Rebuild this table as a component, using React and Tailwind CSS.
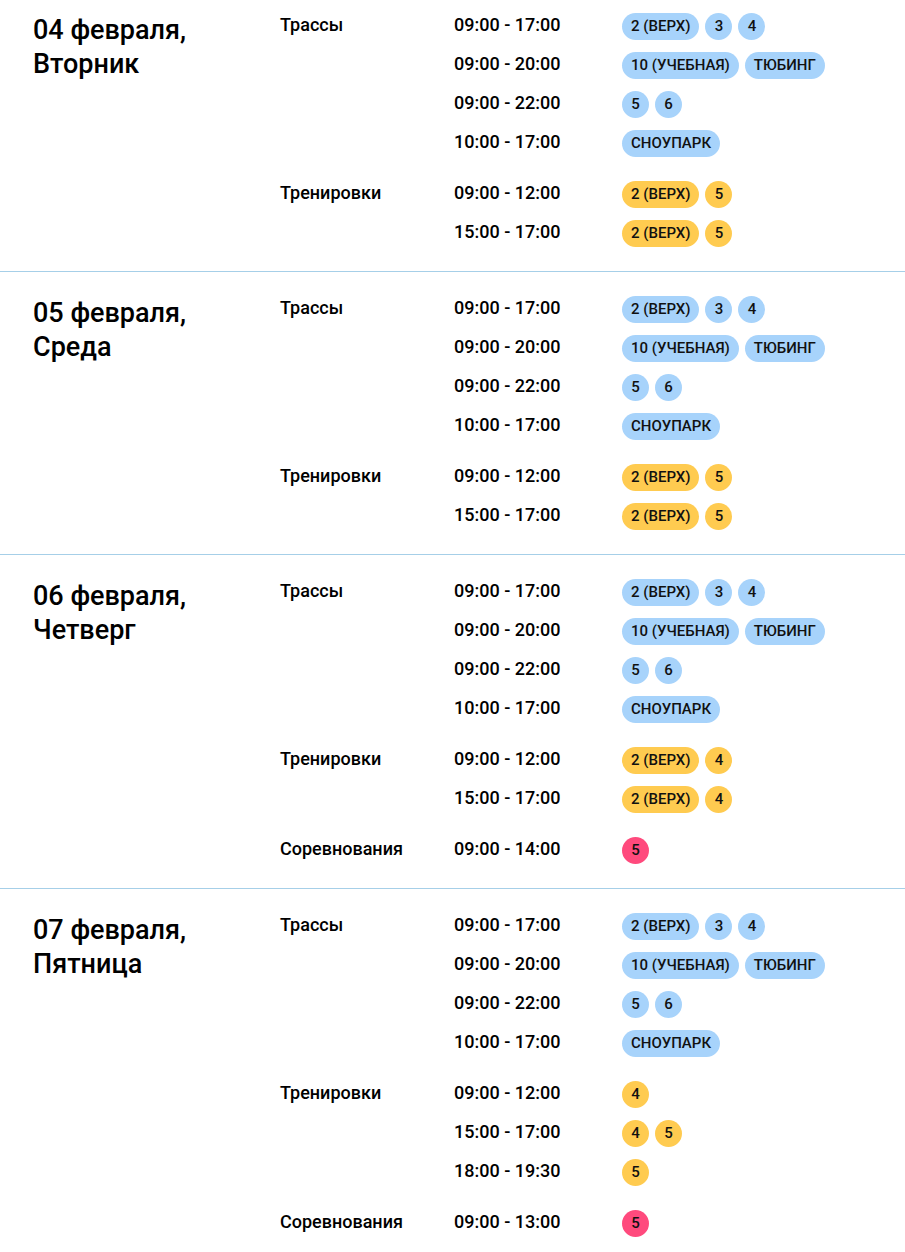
import React from 'react';

const trails = [
  { time: '09:00 - 17:00', chips: ['2 (ВЕРХ)', '3', '4'], color: 'blue' },
  { time: '09:00 - 20:00', chips: ['10 (УЧЕБНАЯ)', 'ТЮБИНГ'], color: 'blue' },
  { time: '09:00 - 22:00', chips: ['5', '6'], color: 'blue' },
  { time: '10:00 - 17:00', chips: ['СНОУПАРК'], color: 'blue' },
];

const days = [
  {
    date: '04 февраля,',
    weekday: 'Вторник',
    groups: [
      { label: 'Трассы', rows: trails },
      {
        label: 'Тренировки',
        rows: [
          { time: '09:00 - 12:00', chips: ['2 (ВЕРХ)', '5'], color: 'yellow' },
          { time: '15:00 - 17:00', chips: ['2 (ВЕРХ)', '5'], color: 'yellow' },
        ],
      },
    ],
  },
  {
    date: '05 февраля,',
    weekday: 'Среда',
    groups: [
      { label: 'Трассы', rows: trails },
      {
        label: 'Тренировки',
        rows: [
          { time: '09:00 - 12:00', chips: ['2 (ВЕРХ)', '5'], color: 'yellow' },
          { time: '15:00 - 17:00', chips: ['2 (ВЕРХ)', '5'], color: 'yellow' },
        ],
      },
    ],
  },
  {
    date: '06 февраля,',
    weekday: 'Четверг',
    groups: [
      { label: 'Трассы', rows: trails },
      {
        label: 'Тренировки',
        rows: [
          { time: '09:00 - 12:00', chips: ['2 (ВЕРХ)', '4'], color: 'yellow' },
          { time: '15:00 - 17:00', chips: ['2 (ВЕРХ)', '4'], color: 'yellow' },
        ],
      },
      {
        label: 'Соревнования',
        rows: [{ time: '09:00 - 14:00', chips: ['5'], color: 'red' }],
      },
    ],
  },
  {
    date: '07 февраля,',
    weekday: 'Пятница',
    groups: [
      { label: 'Трассы', rows: trails },
      {
        label: 'Тренировки',
        rows: [
          { time: '09:00 - 12:00', chips: ['4'], color: 'yellow' },
          { time: '15:00 - 17:00', chips: ['4', '5'], color: 'yellow' },
          { time: '18:00 - 19:30', chips: ['5'], color: 'yellow' },
        ],
      },
      {
        label: 'Соревнования',
        rows: [{ time: '09:00 - 13:00', chips: ['5'], color: 'red' }],
      },
    ],
  },
];

const chipColors = {
  blue: 'bg-[#a7d3fb]',
  yellow: 'bg-[#ffcb50]',
  red: 'bg-[#ff4a7d]',
};

function Chip({ text, color }) {
  return (
    <span
      className={`${chipColors[color]} h-[27px] min-w-[27px] rounded-full px-[9px] flex items-center justify-center text-[15px] font-medium text-[#111] leading-none`}
    >
      {text}
    </span>
  );
}

function Day({ day, first }) {
  return (
    <div className={`flex border-b border-[#a6cfe8] pb-[24px] ${first ? 'pt-[13px]' : 'pt-[24px]'}`}>
      <div className="w-[280px] shrink-0 pl-[33px] text-[27px] leading-[34px] font-medium text-black">
        <div>{day.date}</div>
        <div>{day.weekday}</div>
      </div>
      <div className="flex flex-col gap-[24px]">
        {day.groups.map((g, gi) => (
          <div key={gi} className="flex items-start">
            <div className="w-[174px] shrink-0 leading-[23px] text-[18px] font-medium text-black">
              {g.label}
            </div>
            <div className="flex flex-col gap-[12px]">
              {g.rows.map((r, ri) => (
                <div key={ri} className="flex items-start h-[27px]">
                  <div className="w-[168px] shrink-0 leading-[23px] text-[18px] font-medium text-black">
                    {r.time}
                  </div>
                  <div className="flex gap-[6px]">
                    {r.chips.map((c, ci) => (
                      <Chip key={ci} text={c} color={r.color} />
                    ))}
                  </div>
                </div>
              ))}
            </div>
          </div>
        ))}
      </div>
    </div>
  );
}

export default function App() {
  return (
    <div className="bg-white min-h-screen w-[905px]" style={{ fontFamily: 'Roboto, "Noto Sans", sans-serif' }}>
      {days.map((d, i) => (
        <Day key={i} day={d} first={i === 0} />
      ))}
    </div>
  );
}
